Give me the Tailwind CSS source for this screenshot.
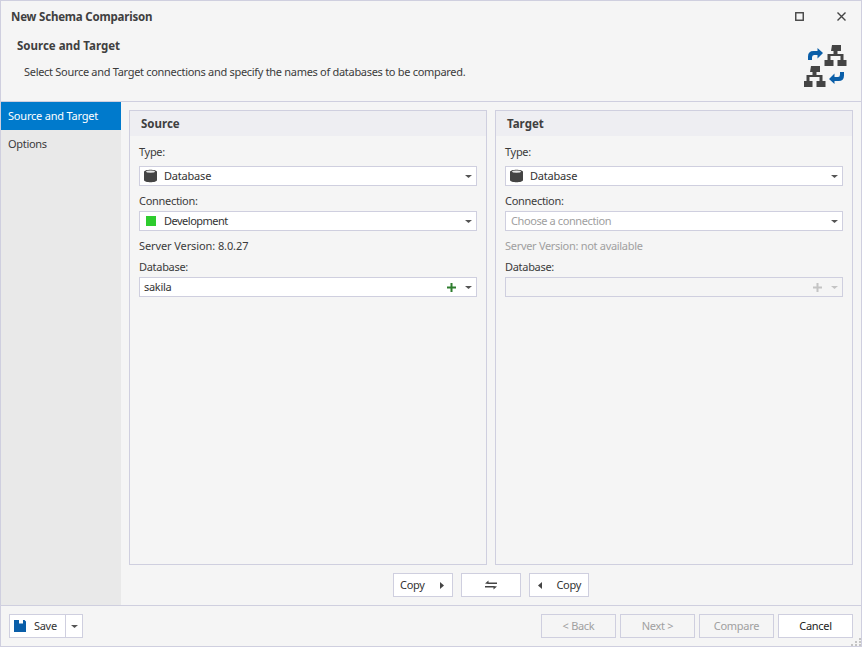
<!DOCTYPE html>
<html>
<head>
<meta charset="utf-8">
<script src="https://cdn.jsdelivr.net/npm/@tailwindcss/browser@4"></script>
</head>
<body class="m-0">
<div class="w-[862px] h-[647px] flex flex-col bg-[#f5f5f5] border border-[#cfcfdf] text-[11px] leading-[16px] tracking-[-0.3px] text-[#3b3b3b] font-['Noto_Sans','Open_Sans',sans-serif] overflow-hidden relative">
  <!-- title bar -->
  <div class="h-[32px] shrink-0 flex items-center pl-[10px] pb-[1px]">
    <span class="font-bold text-[11.5px] text-[#404040] tracking-[-0.2px]">New Schema Comparison</span>
    <div class="ml-auto flex items-center">
      <svg class="mr-[33px]" width="9" height="9" viewBox="0 0 9 9"><rect x="0.75" y="0.75" width="7.5" height="7.5" fill="none" stroke="#444" stroke-width="1.4"/></svg>
      <svg class="mr-[15px]" width="9" height="9" viewBox="0 0 9 9"><path d="M0.5 0.5L8.500 8.500M8.500 0.500L0.500 8.500" stroke="#444" stroke-width="1.4"/></svg>
    </div>
  </div>
  <!-- header -->
  <div class="h-[69px] shrink-0 border-b border-[#cfcfdf] relative pl-[16px] pt-[5px]">
    <div class="font-bold text-[11.5px] text-[#404040] tracking-normal">Source and Target</div>
    <div class="pl-[7px] mt-[10px]">Select Source and Target connections and specify the names of databases to be compared.</div>
    <svg class="absolute left-[803px] top-[11px]" width="44" height="44" viewBox="804 44 44 44">
      <g fill="#444">
        <path d="M832 45h9v6h-3.500v3h6v6h3v6h-9v-6h3v-4h-10v4h3v6h-9v-6h3v-6h6v-3h-2.500z"/>
        <path d="M811 66h9v6h-3.500v3h6v6h3v6h-9v-6h3v-4h-10v4h3v6h-9v-6h3v-6h6v-3h-2.500z"/>
      </g>
      <path d="M808 60v-3.500q0-5.500 5.500-5.500h4v-3l5.500 5l-5.500 5.500v-3.500h-3.500q-2 0-2 2.500v2.500z" fill="#0a5ea8"/>
      <path d="M844 72v3.500q0 5.500-5.500 5.500h-4v3l-5.500-5l5.500-5.500v3.500h3.500q2 0 2-2.500v-2.500z" fill="#0a5ea8"/>
    </svg>
  </div>
  <!-- body -->
  <div class="flex-1 flex min-h-0">
    <div class="w-[120px] shrink-0 bg-[#e9e9e9]">
      <div class="h-[28px] bg-[#007acc] text-white flex items-center pl-[7px] tracking-[-0.2px]">Source and Target</div>
      <div class="h-[28px] flex items-center pl-[7px]">Options</div>
    </div>
    <div class="flex-1 flex flex-col pl-[8px] pr-[8px] pt-[8px]">
      <div class="h-[455px] flex gap-[8px]">
        <!-- Source -->
        <div class="w-[358px] border border-[#cfcfdf] flex flex-col">
          <div class="h-[25px] shrink-0 bg-[#eeeef2] flex items-center pl-[11px] font-bold text-[11.5px] tracking-normal text-[#404040]">Source</div>
          <div class="pt-[8px] px-[9px]">
            <div class="h-[16px]">Type:</div>
            <div class="mt-[6px] h-[20px] bg-white border border-[#cfcfdf] flex items-center">
              <svg class="ml-[4px]" width="13" height="14" viewBox="0 0 13 14"><path d="M0 3C0 0 13 0 13 3V11C13 14 0 14 0 11Z" fill="#444"/><ellipse cx="6.500" cy="2.600" rx="4.500" ry="1.200" fill="#e8e8e8"/></svg>
              <span class="ml-[7px] text-[#333] tracking-[-0.2px]">Database</span>
              <svg class="ml-auto mr-[4px]" width="7" height="3" viewBox="0 0 7 3"><path d="M0 0H7L3.500 3Z" fill="#555"/></svg>
            </div>
            <div class="h-[16px] mt-[7px]">Connection:</div>
            <div class="mt-[2px] h-[20px] bg-white border border-[#cfcfdf] flex items-center">
              <span class="ml-[6px] w-[10px] h-[10px] bg-[#2ecc2e]"></span>
              <span class="ml-[8px] text-[#333] tracking-[-0.5px]">Development</span>
              <svg class="ml-auto mr-[4px]" width="7" height="3" viewBox="0 0 7 3"><path d="M0 0H7L3.500 3Z" fill="#555"/></svg>
            </div>
            <div class="h-[16px] mt-[7px] tracking-[-0.1px]">Server Version: 8.0.27</div>
            <div class="h-[16px] mt-[5px]">Database:</div>
            <div class="mt-[2px] h-[20px] bg-white border border-[#cfcfdf] flex items-center pl-[4px]">
              <span class="text-[#333]">sakila</span>
              <svg class="ml-auto mr-[9px]" width="9" height="9" viewBox="0 0 9 9"><path d="M3.500 0h2v3.500H9v2H5.500V9h-2V5.500H0v-2h3.500z" fill="#2e7d2e"/></svg>
              <svg class="mr-[4px]" width="7" height="3" viewBox="0 0 7 3"><path d="M0 0H7L3.500 3Z" fill="#555"/></svg>
            </div>
          </div>
        </div>
        <!-- Target -->
        <div class="w-[358px] border border-[#cfcfdf] flex flex-col">
          <div class="h-[25px] shrink-0 bg-[#eeeef2] flex items-center pl-[11px] font-bold text-[11.5px] tracking-normal text-[#404040]">Target</div>
          <div class="pt-[8px] px-[9px]">
            <div class="h-[16px]">Type:</div>
            <div class="mt-[6px] h-[20px] bg-white border border-[#cfcfdf] flex items-center">
              <svg class="ml-[4px]" width="13" height="14" viewBox="0 0 13 14"><path d="M0 3C0 0 13 0 13 3V11C13 14 0 14 0 11Z" fill="#444"/><ellipse cx="6.500" cy="2.600" rx="4.500" ry="1.200" fill="#e8e8e8"/></svg>
              <span class="ml-[7px] text-[#333] tracking-[-0.2px]">Database</span>
              <svg class="ml-auto mr-[4px]" width="7" height="3" viewBox="0 0 7 3"><path d="M0 0H7L3.500 3Z" fill="#555"/></svg>
            </div>
            <div class="h-[16px] mt-[7px]">Connection:</div>
            <div class="mt-[2px] h-[20px] bg-white border border-[#cfcfdf] flex items-center pl-[5px]">
              <span class="text-[#a0a0a0] tracking-[-0.4px]">Choose a connection</span>
              <svg class="ml-auto mr-[4px]" width="7" height="3" viewBox="0 0 7 3"><path d="M0 0H7L3.500 3Z" fill="#555"/></svg>
            </div>
            <div class="h-[16px] mt-[7px] text-[#a0a0a0]">Server Version: not available</div>
            <div class="h-[16px] mt-[5px]">Database:</div>
            <div class="mt-[2px] h-[20px] bg-[#f5f5f5] border border-[#cfcfdf] flex items-center justify-end">
              <svg class="mr-[9px]" width="9" height="9" viewBox="0 0 9 9"><path d="M3.500 0h2v3.500H9v2H5.500V9h-2V5.500H0v-2h3.500z" fill="#c4c4c4"/></svg>
              <svg class="mr-[4px]" width="7" height="3" viewBox="0 0 7 3"><path d="M0 0H7L3.500 3Z" fill="#c4c4c4"/></svg>
            </div>
          </div>
        </div>
      </div>
      <!-- copy buttons -->
      <div class="mt-[8px] flex gap-[8px] pl-[264px]">
        <div class="w-[60px] h-[24px] bg-white border border-[#cfcfdf] flex items-center pl-[6px] pr-[8px] justify-between text-[#333]">
          <span>Copy</span>
          <svg width="4" height="7" viewBox="0 0 4 7"><path d="M0 0L4 3.500L0 7Z" fill="#444"/></svg>
        </div>
        <div class="w-[60px] h-[24px] bg-white border border-[#cfcfdf] flex items-center justify-center">
          <svg width="12" height="10" viewBox="0 0 12 10"><path d="M0 3.500L3.500 0.500V2.500H12V4H3.500z" fill="#444"/><path d="M12 6.500L8.500 9.500V7.500H0V6H8.500z" fill="#444"/></svg>
        </div>
        <div class="w-[60px] h-[24px] bg-white border border-[#cfcfdf] flex items-center pl-[8px] pr-[7px] justify-between text-[#333]">
          <svg width="4" height="7" viewBox="0 0 4 7"><path d="M4 0L0 3.500L4 7Z" fill="#444"/></svg>
          <span>Copy</span>
        </div>
      </div>
    </div>
  </div>
  <!-- footer -->
  <div class="h-[41px] shrink-0 border-t border-[#cfcfdf] flex items-start pt-[8px] pl-[8px] pr-[8px]">
    <div class="w-[74px] h-[24px] bg-white border border-[#cfcfdf] flex items-center">
      <svg class="ml-[4px]" width="12" height="12" viewBox="0 0 12 12"><path d="M0 0H5V3.500H9V0H10.500L12 1.500V12H0Z" fill="#0a5ea8"/></svg>
      <span class="ml-[8px] text-[#333]">Save</span>
      <div class="ml-auto w-[17px] h-full border-l border-[#cfcfdf] flex items-center justify-center">
        <svg width="7" height="3" viewBox="0 0 7 3"><path d="M0 0H7L3.500 3Z" fill="#555"/></svg>
      </div>
    </div>
    <div class="ml-auto flex gap-[4px]">
      <div class="w-[75px] h-[24px] border border-[#cfcfdf] flex items-center justify-center text-[#a0a0a0]">&lt; Back</div>
      <div class="w-[75px] h-[24px] border border-[#cfcfdf] flex items-center justify-center text-[#a0a0a0]">Next &gt;</div>
      <div class="w-[75px] h-[24px] border border-[#cfcfdf] flex items-center justify-center text-[#a0a0a0]">Compare</div>
      <div class="w-[75px] h-[24px] bg-white border border-[#cfcfdf] flex items-center justify-center text-[#222]">Cancel</div>
    </div>
  </div>
  <svg class="absolute right-[0px] bottom-[0px]" width="10" height="8" viewBox="0 0 10 8"><g fill="#c4c4c4"><rect x="8" y="0" width="2" height="2"/><rect x="4" y="3" width="2" height="2"/><rect x="8" y="3" width="2" height="2"/><rect x="0" y="6" width="2" height="2"/><rect x="4" y="6" width="2" height="2"/><rect x="8" y="6" width="2" height="2"/></g></svg>
</div>
</body>
</html>
